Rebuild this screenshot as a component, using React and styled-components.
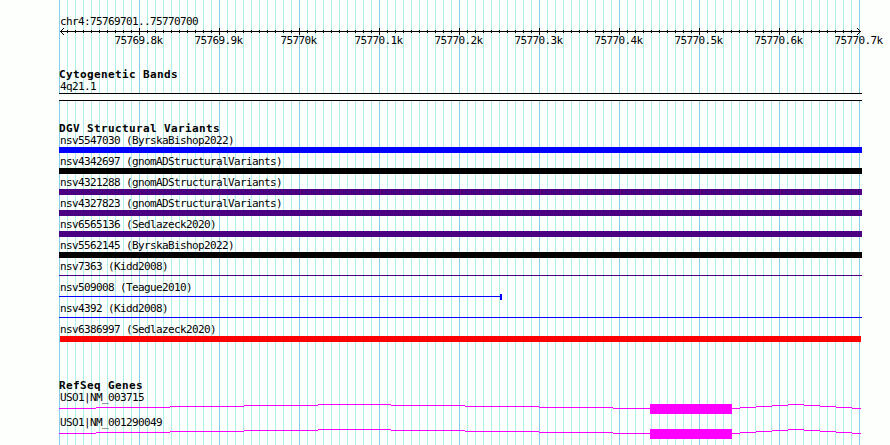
import React from 'react';
import styled, { createGlobalStyle } from 'styled-components';

const GlobalStyle = createGlobalStyle`
  body {
    margin: 0;
    background: #fdfffc;
    overflow: hidden;
  }
`;

const Browser = styled.main`
  box-sizing: border-box;
  width: 890px;
  height: 445px;
  padding-left: 59px;
  overflow: hidden;
  background: #fdfffc;
  color: #000;
  font-family: 'DejaVu Sans Mono', 'Liberation Mono', monospace;
`;

const Panel = styled.div`
  display: flex;
  flex-direction: column;
  width: 803px;
  height: 445px;
  background-image:
    repeating-linear-gradient(to right, #87ceeb 0 1px, transparent 1px 80px),
    repeating-linear-gradient(to right, #afeeee 0 1px, transparent 1px 8px);
`;

const Label = styled.div`
  height: 12px;
  padding-left: 1px;
  font-size: 11px;
  line-height: 12px;
  letter-spacing: -0.622px;
  white-space: pre;
`;

const Title = styled.h2`
  height: 12px;
  margin: 0;
  font-size: 11px;
  font-weight: 700;
  line-height: 12px;
  letter-spacing: 0.378px;
  white-space: pre;
`;

const Ruler = styled.header`
  flex: none;
  height: 53px;
  padding-top: 16px;
`;

const Drawing = styled.svg`
  display: block;
  width: 803px;
  height: ${({ $height }) => $height}px;
  shape-rendering: crispEdges;
`;

const Ticks = styled.div`
  display: flex;
  width: 880px;
  margin-left: 39.5px;
`;

const Tick = styled(Label)`
  flex: 0 0 80px;
  padding: 0;
  text-align: center;
`;

const Section = styled.section`
  flex: none;
  height: ${({ $height }) => $height}px;
`;

const Band = styled.div`
  height: 6px;
  border: solid #000;
  border-width: 1px 0;
  background: #fdfffc;
`;

const Variant = styled.div`
  height: 21px;
`;

const Glyph = styled.div`
  display: flex;
  align-items: center;
  height: 6px;
`;

const Bar = styled.div`
  width: 100%;
  height: 6px;
  margin: 0 ${({ $inset }) => ($inset ? 1 : 0)}px;
  background: ${({ $color }) => $color};
`;

const Line = styled.div`
  width: ${({ $width }) => $width || 803}px;
  height: 1px;
  margin-bottom: 1px;
  background: ${({ $color }) => $color};
`;

const Cap = styled.div`
  width: 2px;
  height: 6px;
  background: ${({ $color }) => $color};
`;

const Gene = styled.div`
  height: 25px;
`;

const ticks = [
  '75769.8k',
  '75769.9k',
  '75770k',
  '75770.1k',
  '75770.2k',
  '75770.3k',
  '75770.4k',
  '75770.5k',
  '75770.6k',
  '75770.7k',
];

const variants = [
  { name: 'nsv5547030 (ByrskaBishop2022)', color: '#0000ff' },
  { name: 'nsv4342697 (gnomADStructuralVariants)', color: '#000000' },
  { name: 'nsv4321288 (gnomADStructuralVariants)', color: '#4b0082' },
  { name: 'nsv4327823 (gnomADStructuralVariants)', color: '#4b0082' },
  { name: 'nsv6565136 (Sedlazeck2020)', color: '#4b0082' },
  { name: 'nsv5562145 (ByrskaBishop2022)', color: '#000000' },
  { name: 'nsv7363 (Kidd2008)', color: '#4b0082', thin: true },
  { name: 'nsv509008 (Teague2010)', color: '#0000ff', thin: true, width: 441 },
  { name: 'nsv4392 (Kidd2008)', color: '#0000ff', thin: true },
  { name: 'nsv6386997 (Sedlazeck2020)', color: '#ff0000', inset: true },
];

// Intron steps: start, end and row of each run of pixels
const introns = [
  [0, 37, 4],
  [37, 111, 3],
  [111, 185, 2],
  [185, 259, 1],
  [259, 332, 0],
  [332, 406, 1],
  [406, 480, 2],
  [480, 554, 3],
  [554, 591, 4],
  [673, 681, 4],
  [681, 697, 3],
  [697, 713, 2],
  [713, 729, 1],
  [729, 745, 0],
  [745, 761, 1],
  [761, 777, 2],
  [777, 793, 3],
  [793, 802, 4],
];

const Axis = () => (
  <Drawing $height={7} viewBox="0 0 803 7">
    <rect x="1" y="3" width="801" height="1" />
    {Array.from({ length: 99 }, (_, i) => i + 1).map((i) => (
      <rect
        key={i}
        x={i * 8}
        y={i % 10 ? 2 : 0}
        width="1"
        height={i % 10 ? 3 : 7}
      />
    ))}
    {[0, 1, 2, 3].map((i) => (
      <React.Fragment key={i}>
        <rect x={1 + i} y={3 - i} width="1" height="1" />
        <rect x={1 + i} y={3 + i} width="1" height="1" />
        <rect x={801 - i} y={3 - i} width="1" height="1" />
        <rect x={801 - i} y={3 + i} width="1" height="1" />
      </React.Fragment>
    ))}
  </Drawing>
);

const VariantRow = ({ name, color, thin, width, inset }) => (
  <Variant>
    <Label>{name}</Label>
    <Glyph>
      {thin ? <Line $color={color} $width={width} /> : <Bar $color={color} $inset={inset} />}
      {width && <Cap $color={color} />}
    </Glyph>
  </Variant>
);

// The exons and introns sit on a ten pixel high strip below the name
const GeneRow = ({ name }) => (
  <Gene>
    <Label>{name}</Label>
    <Drawing $height={10} viewBox="0 0 803 10" fill="#ff00ff">
      {introns.map(([start, end, y]) => (
        <rect key={start} x={start} y={y} width={end - start} height="1" />
      ))}
      <rect x="591" y="0" width="82" height="10" />
    </Drawing>
  </Gene>
);

const App = () => (
  <Browser>
    <GlobalStyle />
    <Panel>
      <Ruler>
        <Label>chr4:75769701..75770700</Label>
        <Axis />
        <Ticks>
          {ticks.map((tick) => (
            <Tick key={tick}>{tick}</Tick>
          ))}
        </Ticks>
      </Ruler>
      <Section $height={54}>
        <Title>Cytogenetic Bands</Title>
        <Label>4q21.1</Label>
        <Band />
      </Section>
      <Section $height={257}>
        <Title>DGV Structural Variants</Title>
        {variants.map((variant) => (
          <VariantRow key={variant.name} {...variant} />
        ))}
      </Section>
      <Section $height={66}>
        <Title>RefSeq Genes</Title>
        <GeneRow name="USO1|NM_003715" />
        <GeneRow name="USO1|NM_001290049" />
      </Section>
    </Panel>
  </Browser>
);

export default App;
